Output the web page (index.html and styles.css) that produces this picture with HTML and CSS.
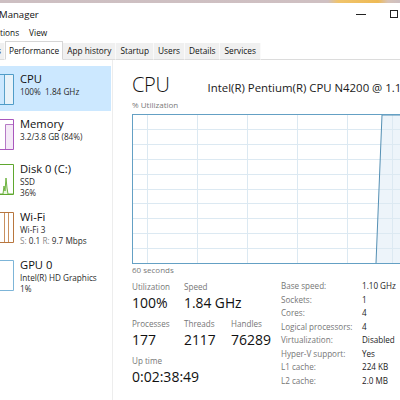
FILE: index.html
```html
<!DOCTYPE html>
<html lang="en">
<head>
<meta charset="utf-8">
<title>Task Manager</title>
<link rel="stylesheet" href="styles.css">
</head>
<body>
<div class="window">
  <div class="topstrip"></div>
  <div class="titlebar">
    <span class="title">Manager</span>
    <div class="controls"><span class="min"></span><span class="max"></span></div>
  </div>
  <div class="menubar"><span>tions</span><span>View</span></div>
  <div class="tabs">
    <span class="tab cut">s</span>
    <span class="tab active">Performance</span>
    <span class="tab">App history</span>
    <span class="tab">Startup</span>
    <span class="tab">Users</span>
    <span class="tab">Details</span>
    <span class="tab">Services</span>
  </div>
  <div class="body">
    <aside class="sidebar">
      <div class="item selected">
        <svg class="thumb" width="14" height="31" viewBox="0 0 14 31">
          <rect x="4" y="0.5" width="10" height="30" fill="#e8f2f9"/>
          <path d="M4.5 1V30" stroke="#5aa1c9"/>
          <path d="M0 0.5H13.5V30.5H0" fill="none" stroke="#4f9cc8"/>
        </svg>
        <div class="info">
          <div class="name">CPU</div>
          <div class="sub">100%&nbsp; 1.84 GHz</div>
        </div>
      </div>
      <div class="item">
        <svg class="thumb" width="14" height="31" viewBox="0 0 14 31">
          <rect x="5" y="5" width="9" height="25" fill="#f4e9f7"/>
          <path d="M5.5 30V5.5H13" fill="none" stroke="#b67ac6"/>
          <path d="M0 0.5H13.5V30.5H0" fill="none" stroke="#a957bd"/>
        </svg>
        <div class="info">
          <div class="name">Memory</div>
          <div class="sub">3.2/3.8 GB (84%)</div>
        </div>
      </div>
      <div class="item">
        <svg class="thumb" width="14" height="31" viewBox="0 0 14 31">
          <polygon points="0,30 3,30 4,22 5,27 6,14 7,24 8,30 13,30" fill="#e9f5e0"/>
          <polyline points="0,30 3,30 4,22 5,27 6,14 7,24 8,30 13,30" fill="none" stroke="#6db33f"/>
          <path d="M0 0.5H13.5V30.5H0" fill="none" stroke="#5fa72f"/>
        </svg>
        <div class="info">
          <div class="name">Disk 0 (C:)</div>
          <div class="sub">SSD</div>
          <div class="sub">36%</div>
        </div>
      </div>
      <div class="item">
        <svg class="thumb" width="14" height="31" viewBox="0 0 14 31">
          <path d="M4.5 1V30M8.5 1V30" stroke="#c9905f"/>
          <path d="M0 0.5H13.5V30.5H0" fill="none" stroke="#b8763e"/>
        </svg>
        <div class="info">
          <div class="name">Wi-Fi</div>
          <div class="sub">Wi-Fi 3</div>
          <div class="sub"><span class="dim">S:</span> 0.1 <span class="dim">R:</span> 9.7 Mbps</div>
        </div>
      </div>
      <div class="item">
        <svg class="thumb" width="14" height="31" viewBox="0 0 14 31">
          <path d="M0 0.5H13.5V30.5H0" fill="none" stroke="#7db5d8"/>
        </svg>
        <div class="info">
          <div class="name">GPU 0</div>
          <div class="sub">Intel(R) HD Graphics</div>
          <div class="sub">1%</div>
        </div>
      </div>
    </aside>
    <main class="panel">
      <div class="head">
        <h1 class="heading">CPU</h1>
        <span class="model">Intel(R) Pentium(R) CPU N4200 @ 1.10GHz</span>
      </div>
      <div class="axis top">% Utilization</div>
      <svg class="graph" width="290" height="150" viewBox="0 0 290 150">
        <polygon points="244,149 250,1 290,1 290,149" fill="#edf4fa"/>
        <g stroke="#dce9f2" stroke-width="1">
          <path d="M15.5 1V149M65.5 1V149M115.5 1V149M165.5 1V149M215.5 1V149M260.5 1V149"/>
          <path d="M1 15.5H290M1 30.5H290M1 45.5H290M1 60.5H290M1 75.5H290M1 89.5H290M1 104.5H290M1 119.5H290M1 134.5H290"/>
        </g>
        <polyline points="244,149 250,1 290,1" fill="none" stroke="#5590b4" stroke-width="1"/>
        <rect x="0.5" y="0.5" width="300" height="149" fill="none" stroke="#64a0c4"/>
      </svg>
      <div class="axis bottom">60 seconds</div>
      <div class="stats">
        <div class="live">
          <div class="row">
            <div class="stat c1"><div class="label">Utilization</div><div class="value">100%</div></div>
            <div class="stat c2"><div class="label">Speed</div><div class="value">1.84 GHz</div></div>
          </div>
          <div class="row">
            <div class="stat c1"><div class="label">Processes</div><div class="value">177</div></div>
            <div class="stat c2"><div class="label">Threads</div><div class="value">2117</div></div>
            <div class="stat"><div class="label">Handles</div><div class="value">76289</div></div>
          </div>
          <div class="row">
            <div class="stat"><div class="label">Up time</div><div class="value">0:02:38:49</div></div>
          </div>
        </div>
        <div class="specs">
          <span class="k">Base speed:</span><span class="v">1.10 GHz</span>
          <span class="k">Sockets:</span><span class="v">1</span>
          <span class="k">Cores:</span><span class="v">4</span>
          <span class="k">Logical processors:</span><span class="v">4</span>
          <span class="k">Virtualization:</span><span class="v">Disabled</span>
          <span class="k">Hyper-V support:</span><span class="v">Yes</span>
          <span class="k">L1 cache:</span><span class="v">224 KB</span>
          <span class="k">L2 cache:</span><span class="v">2.0 MB</span>
        </div>
      </div>
    </main>
  </div>
</div>
</body>
</html>
```

FILE: styles.css
```css
* { box-sizing: border-box; margin: 0; padding: 0; }

html, body {
  width: 400px;
  height: 400px;
  overflow: hidden;
  background: #ffffff;
}

body {
  font-family: "Open Sans", "Noto Sans", sans-serif;
  color: #1a1a1a;
}

.window {
  width: 400px;
  height: 400px;
  display: flex;
  flex-direction: column;
  overflow: hidden;
}

.topstrip {
  height: 3px;
  flex: none;
  background: linear-gradient(90deg, #cdbfc2 0, #cfc0c2 328px, #f0c46c 338px, #eeba55 378px, #d7c3b8 388px, #cdbfc2 400px);
}

.titlebar {
  height: 22px;
  flex: none;
  display: flex;
  align-items: center;
  justify-content: space-between;
}

.title {
  font-size: 9.6px;
  margin-left: -1px;
  color: #111;
}

.controls {
  display: flex;
  align-items: center;
  gap: 24px;
  margin-right: 2px;
}

.min {
  width: 10px;
  height: 1px;
  background: #222;
}

.max {
  width: 8px;
  height: 8px;
  border: 1px solid #222;
}

.menubar {
  height: 15px;
  flex: none;
  display: flex;
  align-items: center;
  gap: 10px;
  font-size: 8.3px;
  color: #111;
}

.tabs {
  height: 19px;
  flex: none;
  margin-top: 1px;
  display: flex;
  align-items: flex-end;
  border-bottom: 1px solid #dcdcdc;
  font-size: 8.3px;
  color: #111;
}

.tab {
  height: 17px;
  line-height: 16px;
  padding: 0 4px;
  background: #f0f0f0;
  border-right: 1px solid #fafafa;
  margin-bottom: -1px;
  border-bottom: 1px solid #dcdcdc;
}

.tab.cut {
  padding: 0 3px 0 0;
  margin-left: -3px;
}

.tab.active {
  height: 19px;
  line-height: 18px;
  background: #ffffff;
  border: 1px solid #d6d6d6;
  border-bottom: 1px solid #ffffff;
  padding: 0 3px;
}

.body {
  flex: 1;
  display: flex;
  min-height: 0;
}

.sidebar {
  width: 113px;
  flex: none;
  padding-top: 6px;
  border-right: 1px solid #ededed;
}

.item {
  display: flex;
  align-items: flex-start;
  gap: 6px;
  padding: 5px 0 6px;
  width: 111px;
}

.item.selected {
  background: #cce8ff;
}

.thumb {
  flex: none;
  margin-top: 3px;
  display: block;
}

.info {
  min-width: 0;
}

.name {
  font-size: 11.2px;
  line-height: 16px;
  color: #111;
}

.sub {
  font-size: 8.2px;
  line-height: 10.5px;
  color: #2a2a2a;
  white-space: nowrap;
}

.dim {
  color: #8a8a8a;
}

.panel {
  flex: 1;
  min-width: 0;
  overflow: hidden;
  padding-left: 19px;
}

.head {
  display: flex;
  align-items: baseline;
  gap: 38px;
  margin-top: 11px;
  white-space: nowrap;
}

.heading {
  font-size: 20px;
  font-weight: 300;
  line-height: 28px;
  letter-spacing: -0.3px;
  color: #111;
}

.model {
  font-size: 11.4px;
  color: #1a1a1a;
}

.axis {
  font-size: 8px;
  color: #7a7a7a;
  white-space: nowrap;
}

.axis.top {
  line-height: 12px;
  margin-bottom: 3px;
}

.axis.bottom {
  line-height: 11px;
}

.graph {
  display: block;
}

.stats {
  display: flex;
  margin-top: 4px;
}

.live {
  width: 149px;
  flex: none;
  padding-top: 2px;
  display: flex;
  flex-direction: column;
  gap: 5px;
}

.row {
  display: flex;
}

.stat.c1 { width: 52px; }
.stat.c2 { width: 47px; }

.label {
  font-size: 8.1px;
  line-height: 12px;
  color: #767676;
  white-space: nowrap;
}

.value {
  font-size: 14px;
  line-height: 20px;
  color: #111;
  white-space: nowrap;
}

.stat.c2 .value { font-size: 13.8px; }

.specs {
  display: grid;
  grid-template-columns: 81px auto;
  font-size: 8.1px;
  line-height: 13.2px;
  white-space: nowrap;
}

.specs .k {
  color: #767676;
}

.specs .v {
  color: #1a1a1a;
}
```
